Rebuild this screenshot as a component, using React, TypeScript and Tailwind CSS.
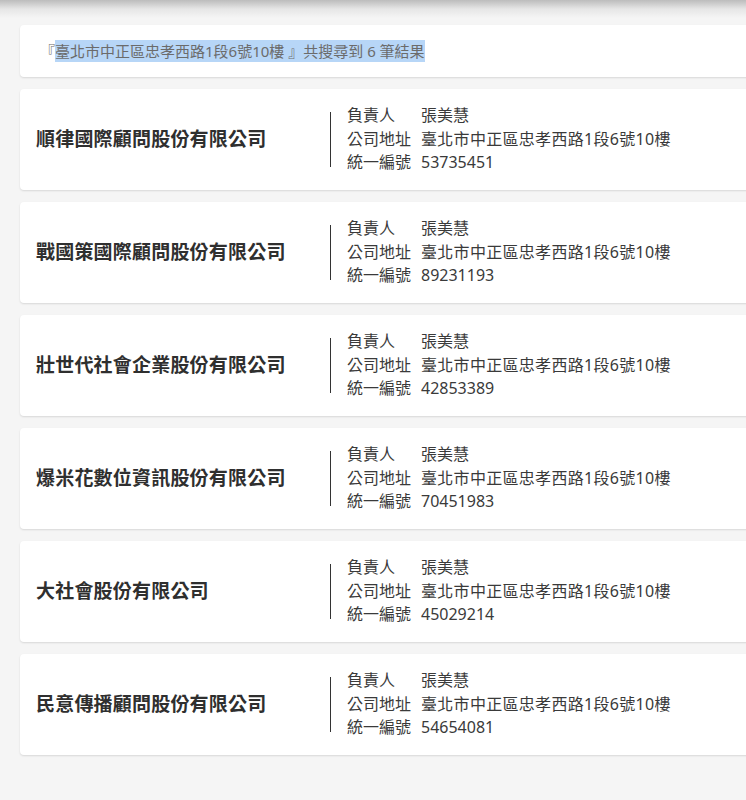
import React from "react";

const companies = [
  { name: "順律國際顧問股份有限公司", id: "53735451" },
  { name: "戰國策國際顧問股份有限公司", id: "89231193" },
  { name: "壯世代社會企業股份有限公司", id: "42853389" },
  { name: "爆米花數位資訊股份有限公司", id: "70451983" },
  { name: "大社會股份有限公司", id: "45029214" },
  { name: "民意傳播顧問股份有限公司", id: "54654081" },
];

const font = { fontFamily: '"Noto Sans", "Noto Sans CJK TC", sans-serif' };

export default function App() {
  return (
    <div
      className="relative min-h-[800px] w-[746px] overflow-hidden bg-[#f5f5f5]"
      style={font}
    >
      <div className="pointer-events-none absolute left-0 top-0 h-[18px] w-full bg-gradient-to-b from-[#bcbcbc] via-[#e6e6e6] to-[#f5f5f5]" />
      <div className="flex w-[780px] flex-col gap-3 pl-5 pt-[25px]">
        <div className="flex h-[52px] items-center rounded-[4px] bg-white pl-5 text-[15px] text-[#6b6b6b] shadow-[0_1px_2px_rgba(0,0,0,0.12)]">
          <span>『 </span>
          <span className="bg-[#b7d6f7]">臺北市中正區忠孝西路1段6號10樓 』共搜尋到 6 筆結果</span>
        </div>
        {companies.map((c) => (
          <div
            key={c.id}
            className="flex h-[101px] items-center rounded-[4px] bg-white pl-4 shadow-[0_1px_2px_rgba(0,0,0,0.12)]"
          >
            <div className="w-[294px] text-[19px] font-bold tracking-[0.2px] text-[#2f2f2f]">
              {c.name}
            </div>
            <div className="mr-4 h-[55px] w-px bg-[#333]" />
            <div className="flex flex-col text-[16px] leading-[23.5px] text-[#3a3a3a]">
              <div className="flex">
                <span className="w-[74px]">負責人</span>
                <span>張美慧</span>
              </div>
              <div className="flex">
                <span className="w-[74px]">公司地址</span>
                <span className="tracking-[0.3px]">臺北市中正區忠孝西路1段6號10樓</span>
              </div>
              <div className="flex">
                <span className="w-[74px]">統一編號</span>
                <span>{c.id}</span>
              </div>
            </div>
          </div>
        ))}
      </div>
    </div>
  );
}
